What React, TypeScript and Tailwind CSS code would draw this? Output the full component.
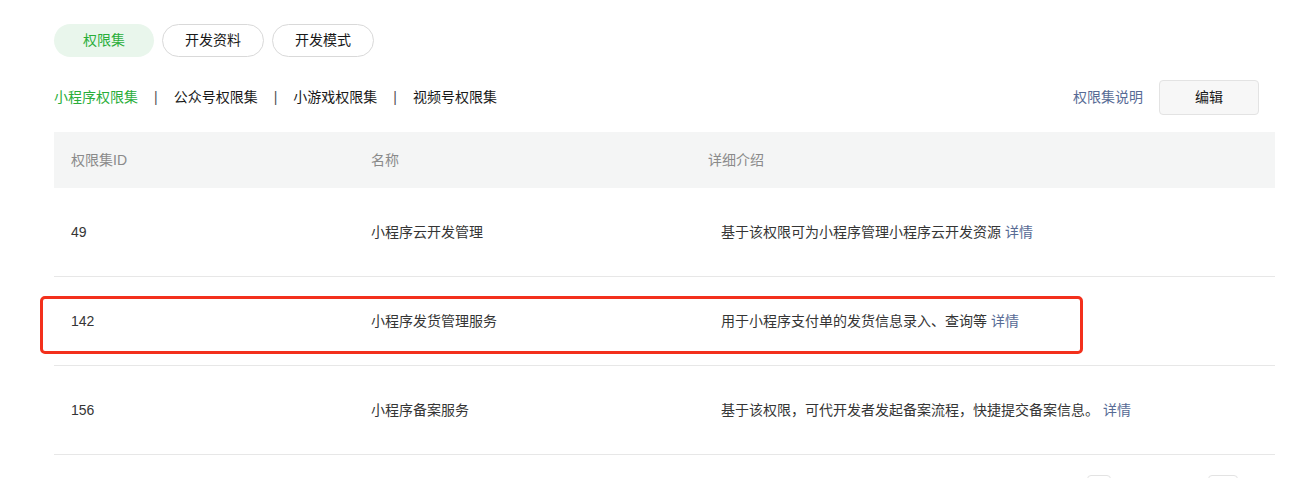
import React from "react";

const rows = [
  { id: "49", name: "小程序云开发管理", desc: "基于该权限可为小程序管理小程序云开发资源" },
  { id: "142", name: "小程序发货管理服务", desc: "用于小程序支付单的发货信息录入、查询等" },
  { id: "156", name: "小程序备案服务", desc: "基于该权限，可代开发者发起备案流程，快捷提交备案信息。" },
];

export default function App() {
  return (
    <div
      className="relative w-[1312px] h-[478px] overflow-hidden bg-white text-[14px] text-[#353535]"
      style={{ fontFamily: '"Liberation Sans", "Noto Sans CJK SC", sans-serif' }}
    >
      <div className="pl-[54px] pr-[37px] pt-[24px]">
        <div className="flex gap-[8px]">
          <div className="w-[100px] h-[33px] rounded-full bg-[#e9f6ec] text-[#2aae3a] flex items-center justify-center">权限集</div>
          <div className="w-[102px] h-[33px] rounded-full border border-[#d9d9d9] flex items-center justify-center text-[#191919]">开发资料</div>
          <div className="w-[102px] h-[33px] rounded-full border border-[#d9d9d9] flex items-center justify-center text-[#191919]">开发模式</div>
        </div>

        <div className="mt-[23px] h-[35px] flex items-center justify-between pr-[16px]">
          <div className="flex items-center text-[#191919]">
            <span className="text-[#2aae3a]">小程序权限集</span>
            <span className="mx-[16px] text-[#555]">|</span>
            <span>公众号权限集</span>
            <span className="mx-[16px] text-[#555]">|</span>
            <span>小游戏权限集</span>
            <span className="mx-[16px] text-[#555]">|</span>
            <span>视频号权限集</span>
          </div>
          <div className="flex items-center gap-[16px]">
            <span className="text-[#576b95]">权限集说明</span>
            <div className="w-[100px] h-[35px] rounded-[4px] border border-[#e3e3e3] bg-[#f7f7f7] flex items-center justify-center text-[#191919]">编辑</div>
          </div>
        </div>

        <div className="mt-[17px]">
          <div className="h-[56px] bg-[#f4f5f5] flex items-center text-[#8a8a8a]">
            <div className="w-[300px] pl-[17px]">权限集ID</div>
            <div className="w-[337px] pl-[17px]">名称</div>
            <div className="flex-1 pl-[17px]">详细介绍</div>
          </div>
          {rows.map((r) => (
            <div key={r.id} className="h-[89px] border-b border-[#e7e7e7] flex items-center">
              <div className="w-[300px] pl-[17px]">{r.id}</div>
              <div className="w-[337px] pl-[17px]">{r.name}</div>
              <div className="flex-1 pl-[30px]">
                {r.desc} <span className="text-[#576b95]">详情</span>
              </div>
            </div>
          ))}
        </div>

        <div className="mt-[20px] flex items-start pl-[1033px] gap-[97px]">
          <div className="w-[24px] h-[28px] rounded-[4px] border border-[#e3e3e3]"></div>
          <div className="w-[30px] h-[28px] rounded-[4px] border border-[#e3e3e3]"></div>
        </div>
      </div>

      <div className="absolute left-[40px] top-[296px] w-[1043px] h-[58px] rounded-[5px] border-[3px] border-[#f3301c]"></div>
    </div>
  );
}
